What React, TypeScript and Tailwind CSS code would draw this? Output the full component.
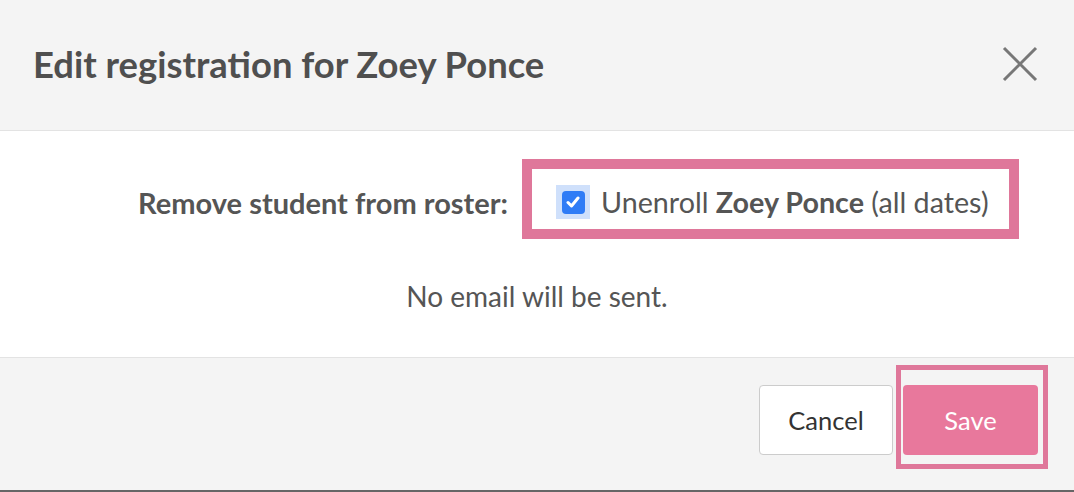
export default function App() {
  return (
    <div
      className="w-[1074px] h-[492px] flex flex-col bg-white text-[#555]"
      style={{ fontFamily: "Lato, 'Open Sans', sans-serif" }}
    >
      <header className="h-[131px] shrink-0 flex items-center justify-between pl-[33px] pr-[36px] pb-[2px] bg-[#f4f4f4] border-b border-[#e3e3e3]">
        <h1 className="text-[36.4px] font-bold text-[#4f4f4f]">Edit registration for Zoey Ponce</h1>
        <button className="w-[36px] h-[36px] flex items-center justify-center text-[#777]">
          <svg width="36" height="36" viewBox="0 0 36 36" fill="none" stroke="currentColor" strokeWidth="3">
            <path d="M2 2 L34 34 M34 2 L2 34" />
          </svg>
        </button>
      </header>

      <main className="h-[226px] shrink-0 flex flex-col pt-[28px]">
        <div className="flex items-center">
          <div className="w-[508px] text-right text-[29px] font-bold text-[#555] pt-[8px]">
            Remove student from roster:
          </div>
          <label className="ml-[14px] flex items-center h-[80px] w-[497px] border-[10px] border-[#df779a] pl-[24px]">
            <span className="w-[34px] h-[34px] bg-[#cfe0fb] flex items-center justify-center mt-[6px]">
              <span className="w-[23px] h-[23px] rounded-[4px] bg-[#2f7cf6] flex items-center justify-center">
                <svg width="14" height="12" viewBox="0 0 14 12" fill="none" stroke="white" strokeWidth="3" strokeLinecap="round" strokeLinejoin="round">
                  <path d="M2 6.5 L5.5 10 L12 2" />
                </svg>
              </span>
            </span>
            <span className="ml-[11px] text-[28.7px] text-[#555] pt-[8px]">
              Unenroll <b className="font-bold">Zoey Ponce</b> (all dates)
            </span>
          </label>
        </div>
        <p className="mt-[36px] text-center text-[28px] text-[#555]">No email will be sent.</p>
      </main>

      <footer className="flex-1 flex items-start justify-end gap-[10px] pt-[27px] pr-[36px] bg-[#f4f4f4] border-t border-[#e3e3e3] border-b-2 border-b-[#666]">
        <button className="w-[134px] h-[70px] rounded-[4px] border border-[#ccc] bg-white text-[25.5px] text-[#333]">
          Cancel
        </button>
        <div className="relative">
          <button className="w-[135px] h-[70px] rounded-[4px] bg-[#e8789c] text-[25.5px] text-white">Save</button>
          <div className="absolute left-[-7px] top-[-20px] right-[-10px] bottom-[-14px] border-[5px] border-[#df779a] pointer-events-none" />
        </div>
      </footer>
    </div>
  );
}
